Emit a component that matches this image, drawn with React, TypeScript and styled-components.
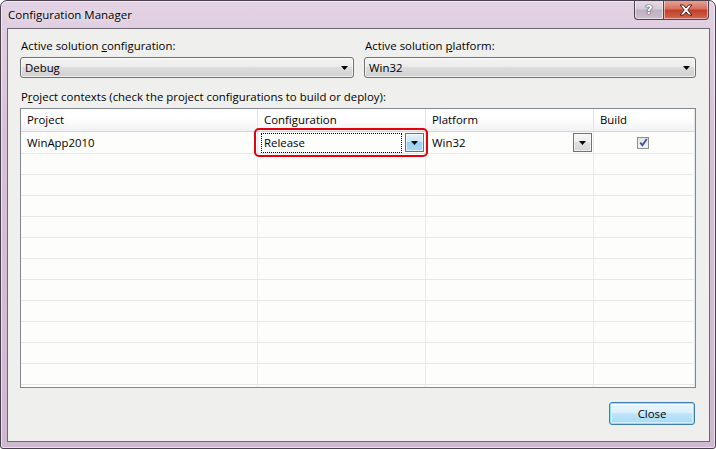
import styled, { createGlobalStyle } from "styled-components";

const GlobalStyle = createGlobalStyle`
  html, body {
    margin: 0;
    padding: 0;
    background: #ffffff;
  }
  body {
    font-family: "Open Sans", "Noto Sans", "Liberation Sans", sans-serif;
    font-size: 11.4px;
    color: #000;
  }
  * {
    box-sizing: border-box;
  }
`;

const columns = [
  { title: "Project", width: 237 },
  { title: "Configuration", width: 168 },
  { title: "Platform", width: 168 },
  { title: "Build", width: 101 },
];

const EMPTY_ROWS = 12;

const ArrowIcon = () => (
  <svg width="7" height="4" viewBox="0 0 7 4">
    <path d="M0 0h7L3.5 4z" fill="#000" />
  </svg>
);

const CloseGlyph = () => (
  <svg width="16" height="12" viewBox="0 0 16 12">
    <path
      d="M2 1h3.5L8 4l2.5-3H14l-4.2 5L14 11h-3.5L8 8l-2.5 3H2l4.2-5z"
      fill="#fff"
      stroke="#5a1a14"
      strokeWidth="1"
      strokeLinejoin="round"
    />
  </svg>
);

const CheckGlyph = () => (
  <svg width="9" height="9" viewBox="0 0 9 9">
    <path
      d="M1.2 4.6l2.2 2.6L7.8 1"
      fill="none"
      stroke="#3d4fa8"
      strokeWidth="1.8"
    />
  </svg>
);

const App = () => {
  return (
    <>
      <GlobalStyle />
      <Window>
        <TitleBar>
          <Title>Configuration Manager</Title>
          <CaptionButtons>
            <HelpButton>?</HelpButton>
            <CloseCaption>
              <CloseGlyph />
            </CloseCaption>
          </CaptionButtons>
        </TitleBar>

        <Client>
          <TopFields>
            <Field>
              <Label>
                Active solution <u>c</u>onfiguration:
              </Label>
              <Combo>
                <span>Debug</span>
                <ArrowIcon />
              </Combo>
            </Field>
            <Field>
              <Label>
                Active solution <u>p</u>latform:
              </Label>
              <Combo>
                <span>Win32</span>
                <ArrowIcon />
              </Combo>
            </Field>
          </TopFields>

          <SectionLabel>
            P<u>r</u>oject contexts (check the project configurations to build
            or deploy):
          </SectionLabel>

          <Table>
            <HeaderRow>
              {columns.map((c) => (
                <HeaderCell key={c.title} $width={c.width}>
                  {c.title}
                </HeaderCell>
              ))}
            </HeaderRow>

            <Row $first>
              <Cell $width={columns[0].width}>WinApp2010</Cell>
              <Cell $width={columns[1].width}>
                <EditCombo>
                  <FocusBox>Release</FocusBox>
                  <DropButton $active>
                    <ArrowIcon />
                  </DropButton>
                </EditCombo>
              </Cell>
              <Cell $width={columns[2].width}>
                <EditCombo>
                  <PlainValue>Win32</PlainValue>
                  <DropButton>
                    <ArrowIcon />
                  </DropButton>
                </EditCombo>
              </Cell>
              <Cell $width={columns[3].width}>
                <CheckBox>
                  <CheckGlyph />
                </CheckBox>
              </Cell>
            </Row>

            {Array.from({ length: EMPTY_ROWS }).map((_, i) => (
              <Row key={i}>
                {columns.map((c) => (
                  <Cell key={c.title} $width={c.width} />
                ))}
              </Row>
            ))}

            <Highlight />
          </Table>

          <Footer>
            <PushButton>Close</PushButton>
          </Footer>
        </Client>
      </Window>
    </>
  );
};

export default App;

const Window = styled.div`
  width: 716px;
  height: 449px;
  display: flex;
  flex-direction: column;
  border: 1px solid #4a3f4c;
  border-radius: 7px 7px 3px 3px;
  background: linear-gradient(
    180deg,
    #e2d2e3 0%,
    #d6c2d7 30%,
    #cfb9d0 100%
  );
  box-shadow: inset 0 0 0 1px rgba(255, 255, 255, 0.55);
  overflow: hidden;
`;

const TitleBar = styled.div`
  height: 27px;
  display: flex;
  justify-content: space-between;
  align-items: flex-start;
`;

const Title = styled.div`
  padding: 6px 0 0 7px;
  font-size: 11.5px;
  text-shadow: 0 0 6px rgba(255, 255, 255, 0.9);
`;

const CaptionButtons = styled.div`
  display: flex;
  margin: -1px 6px 0 0;
`;

const CaptionButton = styled.div`
  height: 20px;
  display: flex;
  align-items: center;
  justify-content: center;
  border: 1px solid #4d4450;
  border-top: none;
  box-shadow: inset 0 0 0 1px rgba(255, 255, 255, 0.5);
`;

const HelpButton = styled(CaptionButton)`
  width: 29px;
  border-right: none;
  border-radius: 0 0 0 4px;
  background: linear-gradient(180deg, #e6dde7 0%, #d7cad9 45%, #bfb0c2 55%, #cbbecd 100%);
  color: #fff;
  font-family: "DejaVu Sans", sans-serif;
  font-weight: bold;
  font-size: 13px;
  text-shadow: 0 0 1px #333, 0 0 1px #333, 0 0 1px #333;
`;

const CloseCaption = styled(CaptionButton)`
  width: 46px;
  border-radius: 0 0 4px 0;
  background: linear-gradient(180deg, #e9a899 0%, #d9725f 45%, #c1402b 55%, #d4664d 100%);
`;

const Client = styled.div`
  flex: 1;
  margin: 0 5px 6px 6px;
  border: 1px solid #6f6773;
  background: #eff0ed;
  padding: 9px 13px 0 12px;
  display: flex;
  flex-direction: column;
`;

const TopFields = styled.div`
  display: grid;
  grid-template-columns: 334px 332px;
  column-gap: 10px;
`;

const Field = styled.div`
  display: flex;
  flex-direction: column;
  gap: 4px;
`;

const Label = styled.div`
  height: 15px;
  line-height: 15px;
  padding-left: 1px;
  white-space: nowrap;
`;

const Combo = styled.div`
  height: 21px;
  display: flex;
  align-items: center;
  justify-content: space-between;
  padding: 0 5px 0 4px;
  border: 1px solid #707070;
  border-radius: 3px;
  background: linear-gradient(
    180deg,
    #f3f3f3 0%,
    #ebebeb 50%,
    #dddddd 50%,
    #d0d0d0 100%
  );
  box-shadow: inset 0 0 0 1px rgba(255, 255, 255, 0.7);
`;

const SectionLabel = styled.div`
  margin-top: 11px;
  height: 15px;
  line-height: 15px;
  padding-left: 1px;
  white-space: nowrap;
`;

const Table = styled.div`
  position: relative;
  margin-top: 4px;
  height: 280px;
  border: 1px solid #828790;
  background: #fdfdfb;
  overflow: hidden;
`;

const HeaderRow = styled.div`
  display: flex;
  height: 23px;
  border-bottom: 1px solid #d5d5d5;
  background: linear-gradient(180deg, #ffffff 0%, #ffffff 40%, #f1f2f4 100%);
`;

const HeaderCell = styled.div<{ $width: number }>`
  width: ${({ $width }) => $width}px;
  flex: none;
  padding-left: 6px;
  line-height: 21px;
  border-right: 1px solid #e3e5e8;
`;

const Row = styled.div<{ $first?: boolean }>`
  display: flex;
  height: ${({ $first }) => ($first ? 22 : 21)}px;
  border-bottom: 1px solid #e6e7e6;
`;

const Cell = styled.div<{ $width: number }>`
  width: ${({ $width }) => $width}px;
  flex: none;
  display: flex;
  align-items: center;
  padding-left: 6px;
  border-right: 1px solid #e4ebf5;
`;

const EditCombo = styled.div`
  flex: 1;
  height: 20px;
  display: flex;
  align-items: center;
  gap: 3px;
  margin-left: -3px;
  padding-right: 1px;
`;

const FocusBox = styled.div`
  flex: 1;
  height: 20px;
  line-height: 18px;
  padding-left: 2px;
  border: 1px dotted #000;
`;

const PlainValue = styled.div`
  flex: 1;
  padding-left: 3px;
`;

const DropButton = styled.div<{ $active?: boolean }>`
  width: 19px;
  height: 19px;
  flex: none;
  display: flex;
  align-items: center;
  justify-content: center;
  border: 1px solid ${({ $active }) => ($active ? "#3c7fb1" : "#707070")};
  background: ${({ $active }) =>
    $active
      ? "linear-gradient(180deg, #e5f4fc 0%, #c4e5f6 50%, #98d1ef 50%, #a8daf2 100%)"
      : "linear-gradient(180deg, #f6f6f6 0%, #ececec 50%, #dedede 50%, #d6d6d6 100%)"};
  box-shadow: inset 0 0 0 1px rgba(255, 255, 255, 0.6);
`;

const CheckBox = styled.div`
  width: 12px;
  height: 12px;
  margin-left: 37px;
  display: flex;
  align-items: center;
  justify-content: center;
  border: 1px solid #8e8f8f;
  background: linear-gradient(180deg, #e4e4e4 0%, #f4f4f4 100%);
`;

const Highlight = styled.div`
  position: absolute;
  left: 233px;
  top: 19px;
  width: 174px;
  height: 29px;
  border: 2px solid #e3000f;
  border-radius: 5px;
  pointer-events: none;
`;

const Footer = styled.div`
  display: flex;
  justify-content: flex-end;
  margin-top: 14px;
  padding-right: 1px;
`;

const PushButton = styled.button`
  width: 86px;
  height: 23px;
  font: inherit;
  color: #000;
  border: 1px solid #3c7fb1;
  border-radius: 3px;
  background: linear-gradient(
    180deg,
    #eaf6fd 0%,
    #d9f0fc 50%,
    #bee6fd 50%,
    #a7d9f5 100%
  );
  box-shadow: inset 0 0 0 1px #8fe0fb, inset 0 0 0 2px rgba(255, 255, 255, 0.5);
  padding: 0;
`;
